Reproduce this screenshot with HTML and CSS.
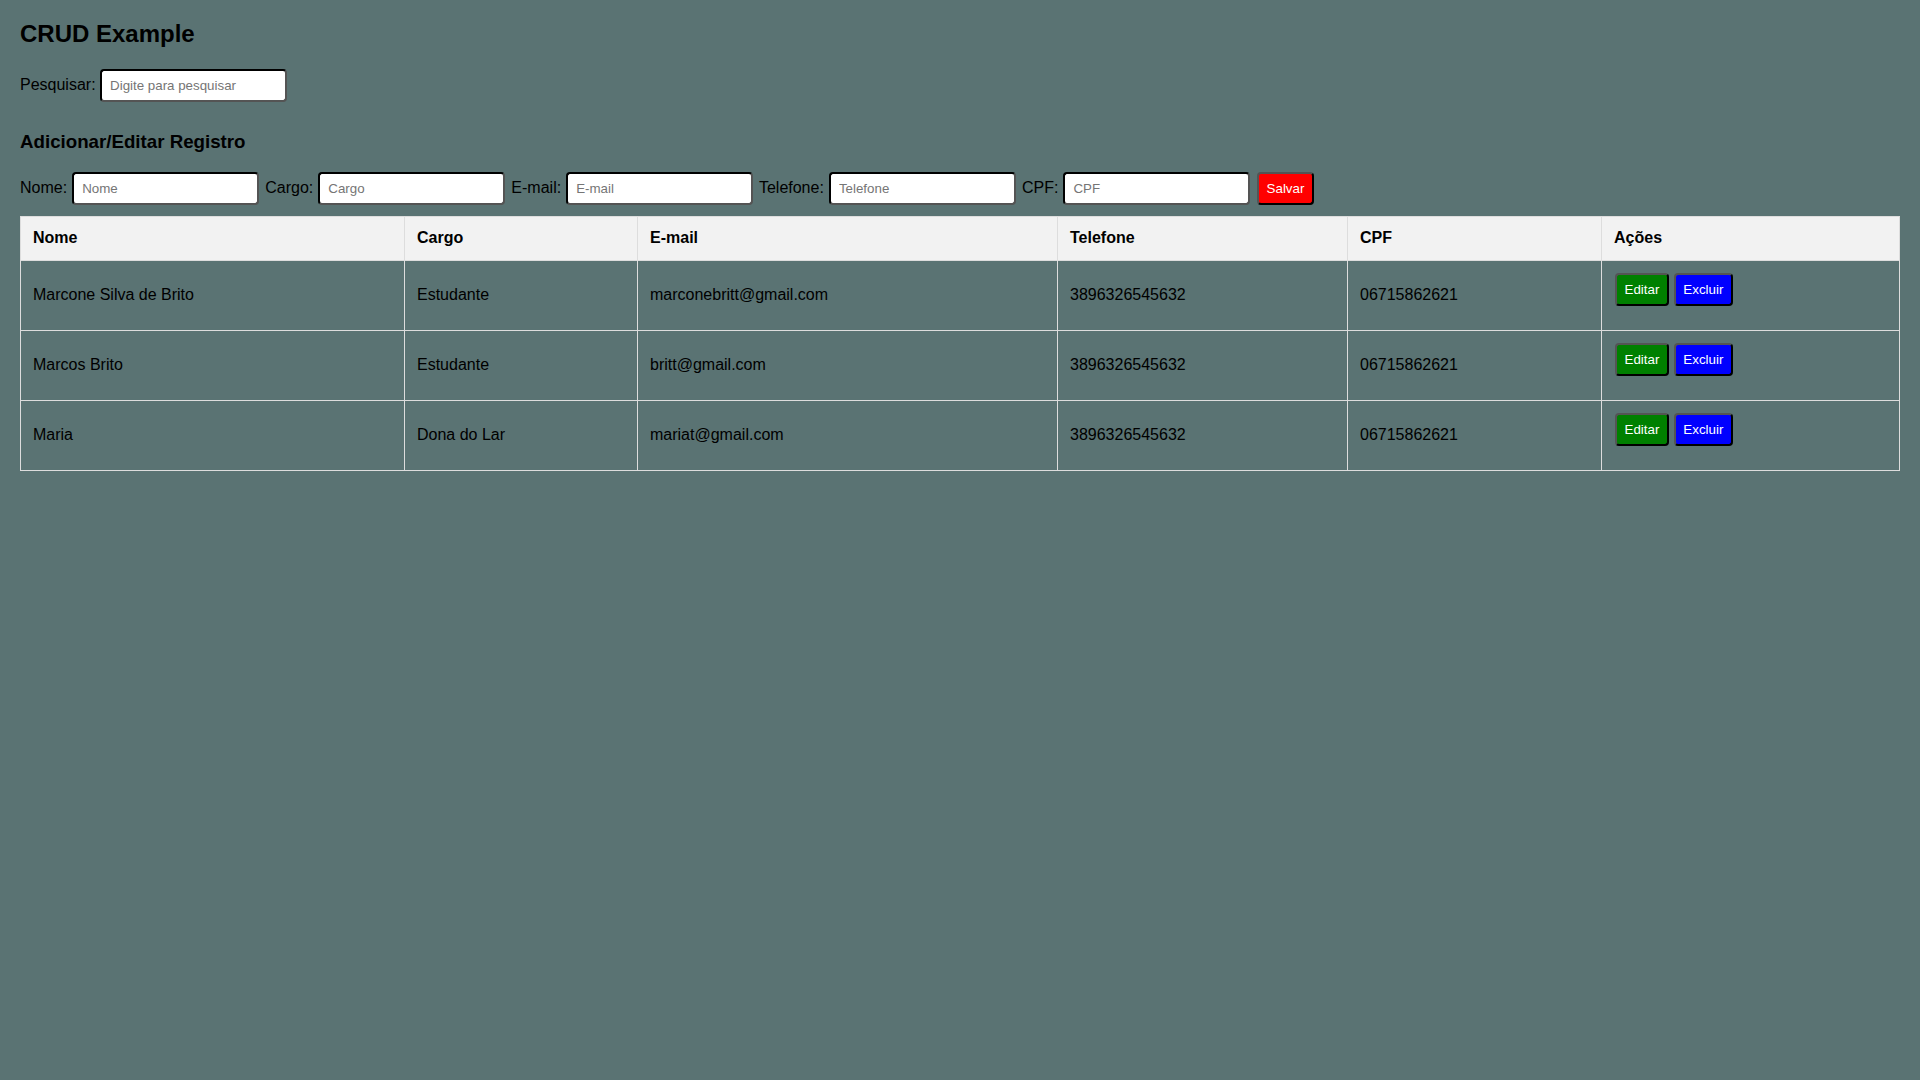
FILE: index.html
```html
<!DOCTYPE html>
<html lang="pt-BR">
<head>
<meta charset="utf-8">
<title>CRUD Example</title>
<link rel="stylesheet" href="styles.css">
</head>
<body>
<h2 class="title">CRUD Example</h2>
<div class="search">
<label class="field-label" for="search">Pesquisar:</label> <input class="field" id="search" type="text" placeholder="Digite para pesquisar">
</div>
<h3 class="subtitle">Adicionar/Editar Registro</h3>
<form class="record-form">
<label class="field-label" for="nome">Nome:</label> <input class="field" id="nome" type="text" placeholder="Nome"> <label class="field-label" for="cargo">Cargo:</label> <input class="field" id="cargo" type="text" placeholder="Cargo"> <label class="field-label" for="email">E-mail:</label> <input class="field" id="email" type="text" placeholder="E-mail"> <label class="field-label" for="telefone">Telefone:</label> <input class="field" id="telefone" type="text" placeholder="Telefone"> <label class="field-label" for="cpf">CPF:</label> <input class="field" id="cpf" type="text" placeholder="CPF"> <button type="button" class="btn btn-save">Salvar</button>
</form>
<table class="records">
<colgroup>
<col class="col-nome">
<col class="col-cargo">
<col class="col-email">
<col class="col-telefone">
<col class="col-cpf">
<col class="col-acoes">
</colgroup>
<thead>
<tr><th>Nome</th><th>Cargo</th><th>E-mail</th><th>Telefone</th><th>CPF</th><th>Ações</th></tr>
</thead>
<tbody>
<tr><td>Marcone Silva de Brito</td><td>Estudante</td><td>marconebritt@gmail.com</td><td>3896326545632</td><td>06715862621</td><td><div class="action-group"><button type="button" class="btn btn-edit">Editar</button><button type="button" class="btn btn-delete">Excluir</button></div></td></tr>
<tr><td>Marcos Brito</td><td>Estudante</td><td>britt@gmail.com</td><td>3896326545632</td><td>06715862621</td><td><div class="action-group"><button type="button" class="btn btn-edit">Editar</button><button type="button" class="btn btn-delete">Excluir</button></div></td></tr>
<tr><td>Maria</td><td>Dona do Lar</td><td>mariat@gmail.com</td><td>3896326545632</td><td>06715862621</td><td><div class="action-group"><button type="button" class="btn btn-edit">Editar</button><button type="button" class="btn btn-delete">Excluir</button></div></td></tr>
</tbody>
</table>
</body>
</html>
```

FILE: styles.css
```css
html {
  background: #5a7373;
}

body {
  margin: 20px;
  background: #5a7373;
  font-family: "Liberation Sans", Arial, sans-serif;
  font-size: 16px;
  color: #000;
}

.title {
  font-size: 24px;
  font-weight: bold;
  line-height: normal;
  margin: 0 0 20.7px;
}

.search {
  margin: 0;
}

.subtitle {
  font-size: 18.72px;
  font-weight: bold;
  line-height: normal;
  margin: 29px 0 19.3px;
}

.record-form {
  margin: 0 0 11.2px;
}

.field-label {
  font-size: 16px;
}

.field {
  font-family: "Liberation Sans", Arial, sans-serif;
  font-size: 13.333px;
  line-height: normal;
  width: 167px;
  padding: 7px 8px;
  margin: 0 1.6px 0 0.6px;
  border: 2px inset #000;
  border-radius: 4px;
  background: #fff;
  color: #000;
}

.search .field {
  margin-left: 0;
}

.field::placeholder {
  color: #757575;
}

.btn {
  font-family: "Liberation Sans", Arial, sans-serif;
  font-size: 13.333px;
  line-height: normal;
  padding: 7px 7.5px;
  margin: 0;
  border: 2px outset #000;
  border-radius: 4px;
  color: #fff;
  cursor: pointer;
}

.btn-save {
  background: #ff0000;
  margin-left: 0.6px;
}

.btn-edit {
  background: #008000;
}

.btn-delete {
  background: #0000ff;
}

.records {
  width: 100%;
  border-collapse: collapse;
  table-layout: fixed;
}

.col-nome { width: 384px; }
.col-cargo { width: 233px; }
.col-email { width: 420px; }
.col-telefone { width: 290px; }
.col-cpf { width: 254px; }

.records th,
.records td {
  border: 1px solid #ddd;
  padding: 12px;
  text-align: left;
  vertical-align: middle;
}

.records th {
  background: #f2f2f2;
  font-weight: bold;
  color: #000;
  padding-bottom: 12.6px;
}

.records td {
  color: #000;
}

.action-group {
  display: flex;
  align-items: flex-start;
  gap: 5px;
  height: 45px;
  padding-left: 1px;
}
```
